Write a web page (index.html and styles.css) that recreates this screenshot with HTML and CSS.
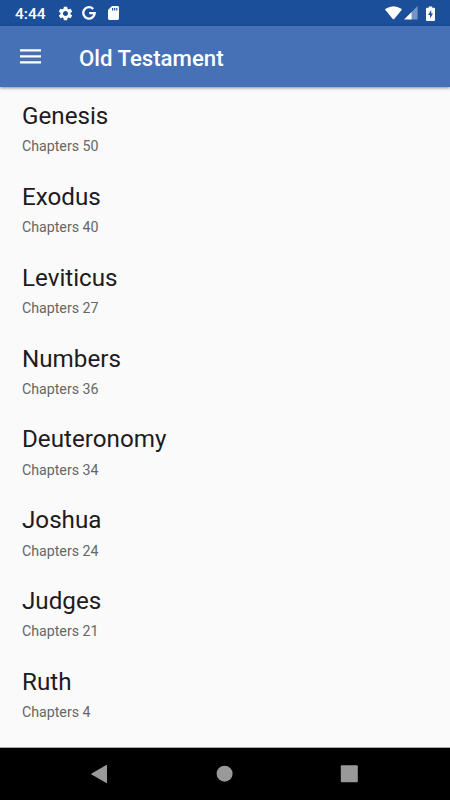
FILE: index.html
```
<!DOCTYPE html>
<html lang="en">
<head>
  <meta charset="UTF-8">
  <meta name="viewport" content="width=device-width, initial-scale=1.0">
  <title>Old Testament</title>
  <link rel="stylesheet" href="styles.css">
</head>
<body>
  <div class="statusbar">
    <span class="time">4:44</span>
    <svg class="gear" width="17" height="17" viewBox="0 0 24 24"><path fill="#fff" d="M19.14 12.94c.04-.3.06-.61.06-.94s-.02-.64-.07-.94l2.03-1.58c.18-.14.23-.41.12-.61l-1.92-3.32c-.12-.22-.37-.29-.59-.22l-2.39.96c-.5-.38-1.03-.7-1.62-.94l-.36-2.54c-.04-.24-.24-.41-.48-.41h-3.84c-.24 0-.43.17-.47.41l-.36 2.54c-.59.24-1.13.57-1.62.94l-2.39-.96c-.22-.08-.47 0-.59.22L2.74 8.87c-.12.21-.08.47.12.61l2.03 1.58c-.05.3-.09.63-.09.94s.02.64.07.94l-2.03 1.58c-.18.14-.23.41-.12.61l1.92 3.32c.12.22.37.29.59.22l2.39-.96c.5.38 1.03.7 1.62.94l.36 2.54c.05.24.24.41.48.41h3.84c.24 0 .44-.17.47-.41l.36-2.54c.59-.24 1.13-.56 1.62-.94l2.39.96c.22.08.47 0 .59-.22l1.92-3.32c.12-.22.07-.47-.12-.61l-2.01-1.58zM12 15.6c-1.98 0-3.6-1.62-3.6-3.6s1.62-3.6 3.6-3.6 3.6 1.62 3.6 3.6-1.62 3.6-3.6 3.6z"/></svg>
    <svg class="google" width="14" height="14" viewBox="0 0 14 14"><path fill="none" stroke="#fff" stroke-width="2.3" d="M11.2 3A5.7 5.7 0 1 0 12.7 7.1H7.2"/></svg>
    <svg class="sd" width="11" height="14" viewBox="0 0 11 14"><path fill="#fff" fill-rule="evenodd" d="M4 0h5.6Q11 0 11 1.4v11.2Q11 14 9.6 14H1.4Q0 14 0 12.6V4zM4 2v2.4h1.2V2zM6.1 2v2.4h1.2V2zM8.2 2v2.4h1.2V2z"/></svg>
    <svg class="wifi" width="17" height="14" viewBox="0 0 17 14"><path fill="#fff" d="M7.8 12.9L.4 3.9Q0 3.2.6 2.7Q8.5-2.3 16.4 2.7Q17 3.2 16.6 3.9L9.2 12.9Q8.5 13.6 7.8 12.9z"/></svg>
    <svg class="signal" width="14" height="14" viewBox="0 0 14 14"><path fill="#fff" fill-opacity=".4" d="M13 .5q.6-.4.6.3V13q0 .6-.6.6H7.7V5.9z"/><path fill="#fff" d="M7.7 5.9v7.7H.8q-.8 0-.3-.6z"/></svg>
    <svg class="battery" width="9" height="15" viewBox="0 0 9 15"><path fill="#fff" fill-rule="evenodd" d="M2.8.4h3.4v1.4H8q1 0 1 1V14q0 1-1 1H1q-1 0-1-1V2.8q0-1 1-1h1.8zM5.2 4L2.1 8.9h2v3.5l2.9-5H5.2z"/></svg>
  </div>
  <div class="toolbar">
    <svg class="menu" width="21" height="15" viewBox="0 0 21 15"><path fill="#fff" d="M0 .2h21v2.3H0zM0 6.3h21v2.3H0zM0 12.3h21v2.3H0z"/></svg>
    <h1 class="title">Old Testament</h1>
  </div>
  <div class="books">
    <div class="book">
      <div class="name">Genesis</div>
      <div class="chapters">Chapters 50</div>
    </div>
    <div class="book">
      <div class="name">Exodus</div>
      <div class="chapters">Chapters 40</div>
    </div>
    <div class="book">
      <div class="name">Leviticus</div>
      <div class="chapters">Chapters 27</div>
    </div>
    <div class="book">
      <div class="name">Numbers</div>
      <div class="chapters">Chapters 36</div>
    </div>
    <div class="book">
      <div class="name">Deuteronomy</div>
      <div class="chapters">Chapters 34</div>
    </div>
    <div class="book">
      <div class="name">Joshua</div>
      <div class="chapters">Chapters 24</div>
    </div>
    <div class="book">
      <div class="name">Judges</div>
      <div class="chapters">Chapters 21</div>
    </div>
    <div class="book">
      <div class="name">Ruth</div>
      <div class="chapters">Chapters 4</div>
    </div>
  </div>
  <div class="navbar">
    <svg width="18" height="18" viewBox="0 0 18 18"><path fill="#999" d="M16.3 0q.7-.3.7.4v17.2q0 .7-.7.4L1.6 9.4q-.6-.4 0-.8z"/></svg>
    <svg width="18" height="18" viewBox="0 0 18 18"><circle fill="#999" cx="9.6" cy="8.7" r="8"/></svg>
    <svg width="18" height="18" viewBox="0 0 18 18"><rect fill="#999" x=".8" y=".3" width="17" height="17" rx="1"/></svg>
  </div>
</body>
</html>
```

FILE: styles.css
```
body {
  font-family: Roboto, sans-serif;
  display: flex;
  flex-direction: column;
  height: 800px;
  margin: 0;
  background-color: #fafafa;
  overflow: hidden;
}
.statusbar {
  display: flex;
  align-items: center;
  height: 26px;
  flex-shrink: 0;
  box-sizing: border-box;
  padding: 0 15px;
  background: #1c4f9a;
  color: #fff;
}
.time {
  width: 42px;
  padding-top: 2px;
  font-size: 15.5px;
  font-weight: 500;
  line-height: 26px;
}
.google {
  margin-left: 7.5px;
}
.sd {
  margin-left: 12px;
}
.wifi {
  margin-left: auto;
}
.signal {
  margin-left: 2px;
}
.battery {
  margin-left: 8px;
}
.toolbar {
  display: flex;
  align-items: center;
  height: 61px;
  flex-shrink: 0;
  padding-left: 20px;
  background: #4671b7;
  box-shadow: 0 1px 3px rgba(0, 0, 0, 0.45);
}
.title {
  margin: 2px 0 0 38px;
  color: #fff;
  font-size: 22.2px;
  font-weight: 500;
}
.books {
  flex: 1;
  overflow: hidden;
  padding: 14px 22px 0;
}
.book {
  height: 80.85px;
}
.name {
  color: #211a20;
  font-size: 24.2px;
  line-height: 30px;
}
.chapters {
  margin-top: 6.4px;
  color: #666;
  font-size: 14.2px;
  line-height: 18px;
}
.navbar {
  display: flex;
  justify-content: space-between;
  align-items: center;
  height: 53px;
  flex-shrink: 0;
  box-sizing: border-box;
  padding: 0 92px 0 90px;
  border-top: 1px solid #aaa;
  background: #000;
}
```
